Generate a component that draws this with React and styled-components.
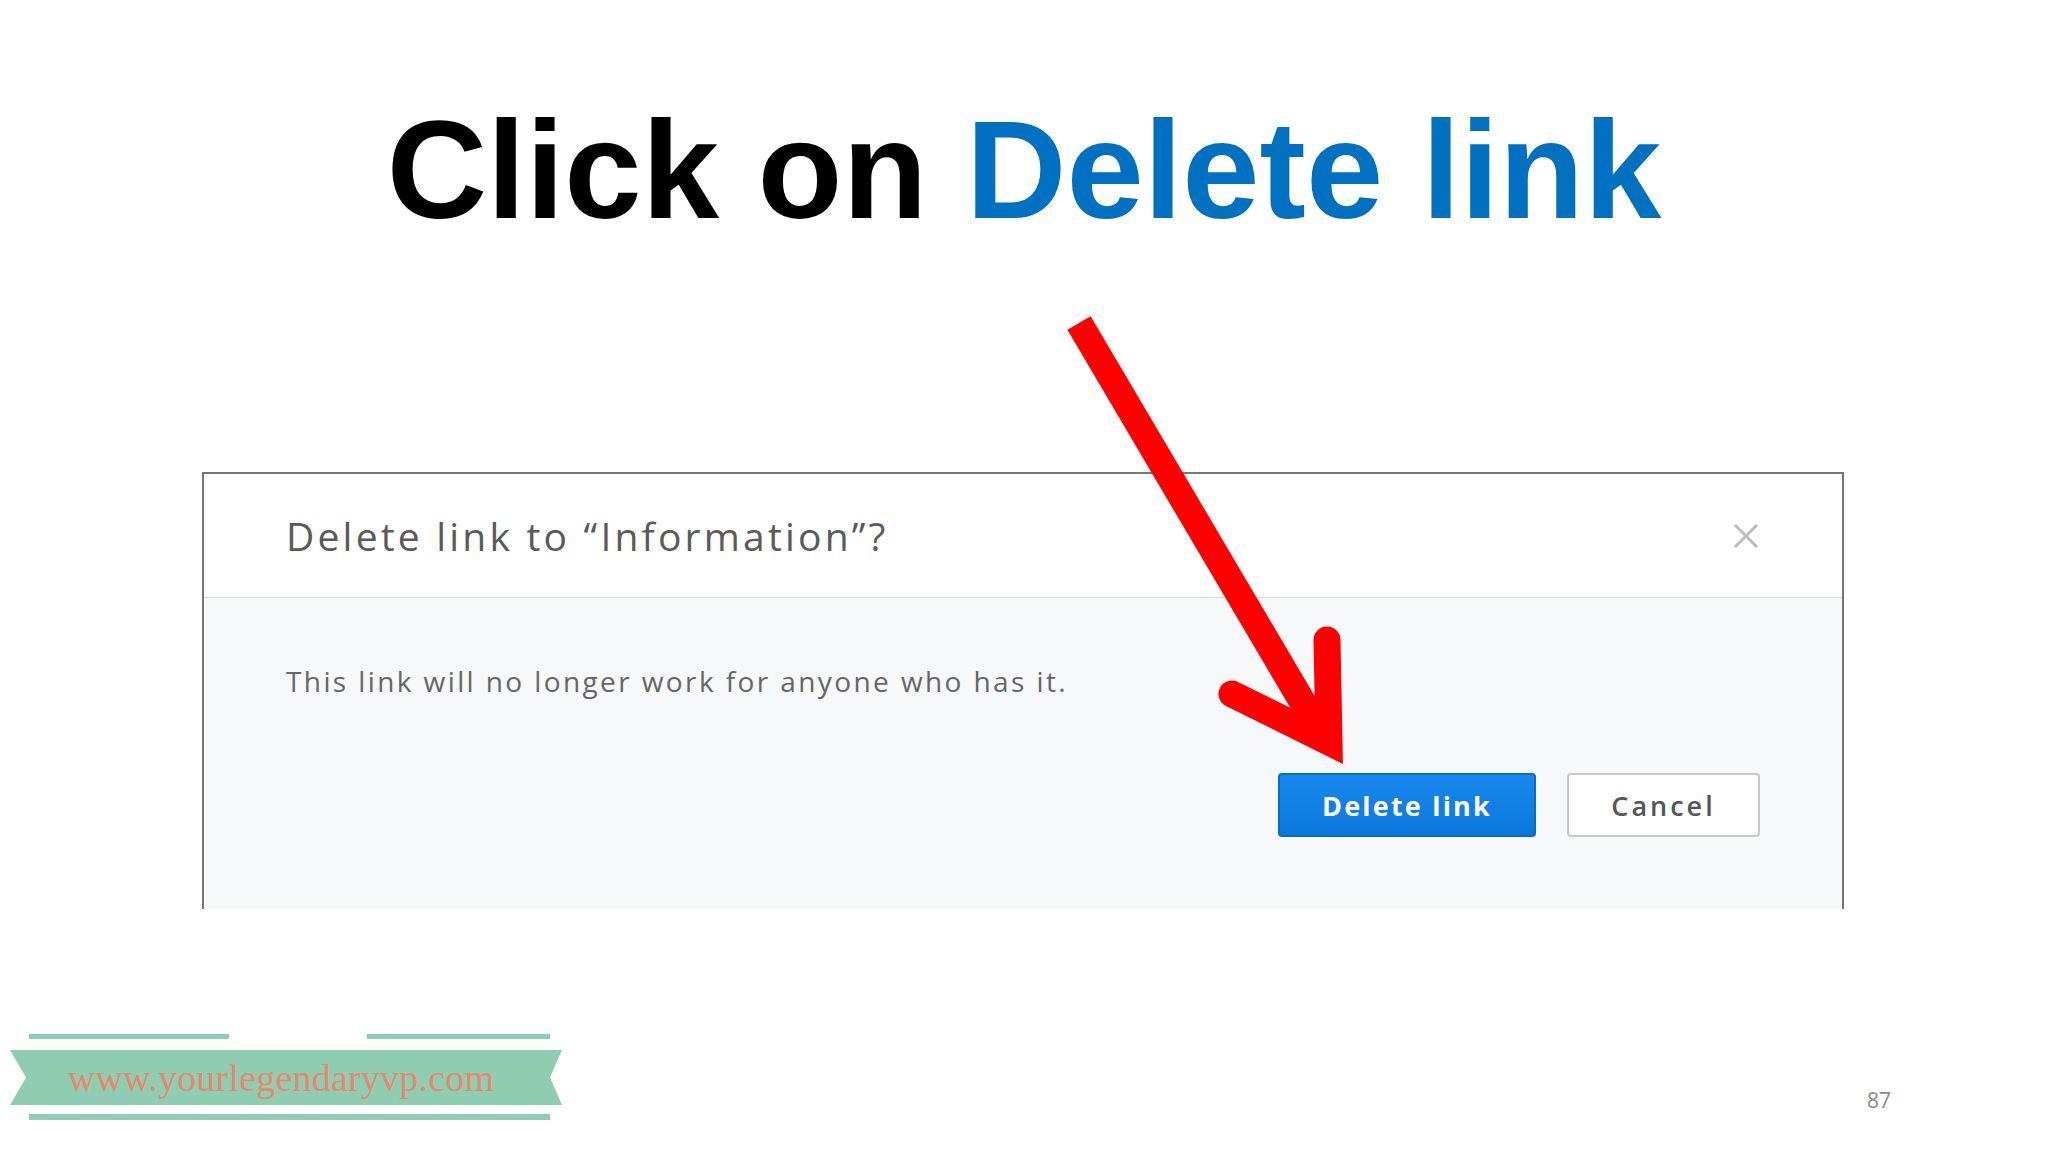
import React from 'react'
import styled, { createGlobalStyle } from 'styled-components'

const GlobalStyle = createGlobalStyle`
  html, body {
    margin: 0;
    padding: 0;
    background: #ffffff;
  }
  * {
    box-sizing: border-box;
  }
`

const Page = styled.div`
  position: relative;
  width: 2048px;
  height: 1152px;
  display: flex;
  flex-direction: column;
  background: #ffffff;
  overflow: hidden;
`

const Title = styled.h1`
  margin: 100px 0 0;
  font-family: 'Liberation Sans', Arial, sans-serif;
  font-weight: 700;
  font-size: 139px;
  line-height: 1;
  text-align: center;
  color: #000000;
`

const Accent = styled.span`
  color: #0070c0;
`

const Dialog = styled.div`
  margin: 233px 0 0 202px;
  width: 1642px;
  height: 437px;
  border: 2px solid #767676;
  border-bottom: none;
  display: flex;
  flex-direction: column;
  background: #f6f8fa;
`

const Header = styled.div`
  height: 124px;
  display: flex;
  align-items: center;
  justify-content: space-between;
  padding: 0 82px 0 82px;
  background: #ffffff;
  border-bottom: 1px solid #d4d6d8;
`

const HeaderTitle = styled.div`
  font-family: 'Open Sans', 'Liberation Sans', sans-serif;
  font-size: 39px;
  color: #5a5a5a;
  letter-spacing: 3.2px;
`

const Close = styled.button`
  width: 28px;
  height: 28px;
  padding: 0;
  border: none;
  background: transparent;
  display: flex;
  align-items: center;
  justify-content: center;
`

const Body = styled.div`
  flex: 1;
  display: flex;
  flex-direction: column;
  padding: 63px 82px 0 82px;
`

const Message = styled.p`
  margin: 0;
  font-family: 'Open Sans', 'Liberation Sans', sans-serif;
  font-size: 28px;
  line-height: 40px;
  color: #666666;
  letter-spacing: 2.4px;
`

const Actions = styled.div`
  margin-top: 72px;
  display: flex;
  justify-content: flex-end;
  gap: 31px;
`

const Button = styled.button`
  height: 64px;
  width: ${({ $w }) => $w}px;
  border-radius: 4px;
  font-family: 'Open Sans', 'Liberation Sans', sans-serif;
  font-size: 27px;
  font-weight: ${({ $primary }) => ($primary ? 700 : 600)};
  letter-spacing: ${({ $primary }) => ($primary ? 2.2 : 3)}px;
  color: ${({ $primary }) => ($primary ? '#ffffff' : '#555555')};
  background: ${({ $primary }) =>
    $primary ? 'linear-gradient(#1889ec, #0b77dd)' : '#ffffff'};
  border: 2px solid ${({ $primary }) => ($primary ? '#0a6cc8' : '#c9c9c9')};
  cursor: pointer;
`

const Arrow = styled.svg`
  position: absolute;
  left: 0;
  top: 0;
  width: 2048px;
  height: 1152px;
  pointer-events: none;
`

const Footer = styled.div`
  margin-top: auto;
  display: flex;
  justify-content: space-between;
  align-items: flex-end;
  padding: 0 157px 32px 10px;
`

const Ribbon = styled.div`
  width: 552px;
  display: flex;
  flex-direction: column;
`

const LineRow = styled.div`
  display: flex;
  justify-content: space-between;
  padding: 0 12px 0 19px;
`

const Line = styled.div`
  height: ${({ $h }) => $h || 5}px;
  width: ${({ $w }) => ($w ? `${$w}px` : '100%')};
  background: #8ecdb2;
`

const Band = styled.div`
  margin: 11px 0 9px;
  height: 55px;
  background: #8ecdb2;
  clip-path: polygon(0 0, 100% 0, calc(100% - 12px) 50%, 100% 100%, 0 100%, 16px 50%);
  display: flex;
  align-items: center;
  justify-content: center;
  padding-right: 10px;
  font-family: 'Liberation Serif', 'Times New Roman', serif;
  font-size: 38px;
  letter-spacing: 0.2px;
  color: #e9876d;
`

const PageNumber = styled.div`
  margin-bottom: 8px;
  font-family: 'Open Sans', 'Liberation Sans', sans-serif;
  font-size: 21px;
  line-height: 24px;
  color: #8a8a8a;
`

const App = () => {
  return (
    <Page>
      <GlobalStyle />
      <Title>
        Click on <Accent>Delete link</Accent>
      </Title>

      <Dialog>
        <Header>
          <HeaderTitle>Delete link to “Information”?</HeaderTitle>
          <Close aria-label="Close">
            <svg width="28" height="28" viewBox="0 0 28 28">
              <path d="M3 3 L25 25 M25 3 L3 25" stroke="#bdbdbd" strokeWidth="3" />
            </svg>
          </Close>
        </Header>
        <Body>
          <Message>This link will no longer work for anyone who has it.</Message>
          <Actions>
            <Button $primary $w={258}>Delete link</Button>
            <Button $w={193}>Cancel</Button>
          </Actions>
        </Body>
      </Dialog>

      <Footer>
        <Ribbon>
          <LineRow>
            <Line $w={200} />
            <Line $w={183} />
          </LineRow>
          <Band>www.yourlegendaryvp.com</Band>
          <LineRow>
            <Line $h={6} />
          </LineRow>
        </Ribbon>
        <PageNumber>87</PageNumber>
      </Footer>

      <Arrow viewBox="0 0 2048 1152">
        <path d="M1079 323 L1322 735" stroke="#ff0000" strokeWidth="27" fill="none" />
        <path
          d="M1327 640 L1329 742 L1232 694"
          stroke="#ff0000"
          strokeWidth="27"
          fill="none"
          strokeLinecap="round"
          strokeLinejoin="miter"
        />
      </Arrow>
    </Page>
  )
}

export default App
